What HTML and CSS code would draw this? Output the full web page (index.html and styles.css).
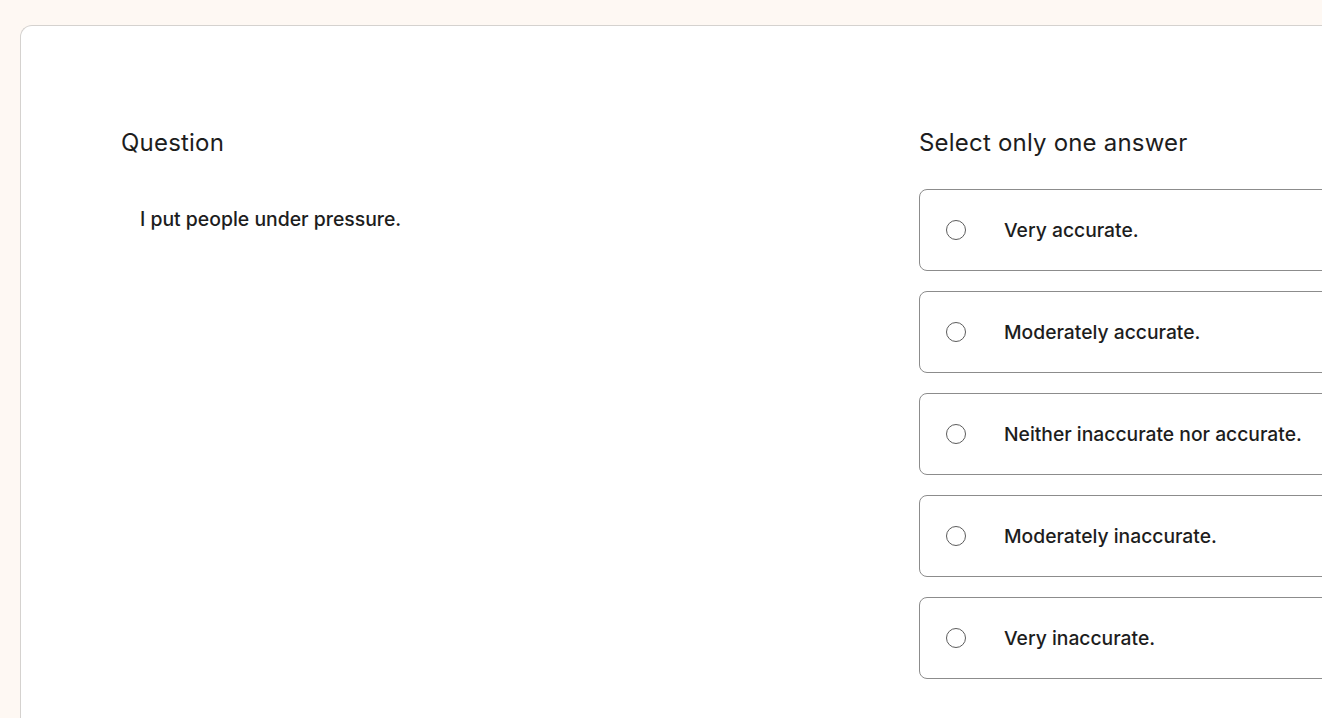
FILE: index.html
```html
<!DOCTYPE html>
<html lang="en">
<head>
<meta charset="utf-8">
<title>Question</title>
<link rel="stylesheet" href="styles.css">
</head>
<body>
<div class="page">
  <main class="card">
    <section class="question">
      <h2 class="heading">Question</h2>
      <p class="question-text">I put people under pressure.</p>
    </section>
    <section class="answers">
      <h2 class="heading">Select only one answer</h2>
      <div class="options">
        <label class="option"><span class="radio"></span><span class="label">Very accurate.</span></label>
        <label class="option"><span class="radio"></span><span class="label">Moderately accurate.</span></label>
        <label class="option"><span class="radio"></span><span class="label">Neither inaccurate nor accurate.</span></label>
        <label class="option"><span class="radio"></span><span class="label">Moderately inaccurate.</span></label>
        <label class="option"><span class="radio"></span><span class="label">Very inaccurate.</span></label>
      </div>
    </section>
  </main>
</div>
</body>
</html>
```
FILE: styles.css
```css
html, body {
  margin: 0;
  padding: 0;
}
body {
  background: #fef8f3;
  font-family: Inter, "Noto Sans", "Liberation Sans", sans-serif;
  color: #1d1d1d;
  overflow: hidden;
  height: 718px;
}
.page {
  padding: 25px 0 0 20px;
}
.card {
  background: #ffffff;
  border: 1px solid #d5d2cf;
  border-right: none;
  border-radius: 12px 0 0 0;
  padding: 102px 0 60px 100px;
  width: 1400px;
  min-height: 700px;
  display: grid;
  grid-template-columns: 798px 500px;
}
.heading {
  margin: 0;
  font-size: 24px;
  line-height: 30px;
  font-weight: 400;
  letter-spacing: 0.2px;
  color: #1d1d1d;
}
.question-text {
  margin: 49px 0 0 19px;
  font-size: 19.4px;
  line-height: 24px;
  font-weight: 500;
}
.options {
  margin-top: 31px;
  display: flex;
  flex-direction: column;
  gap: 20px;
}
.option {
  display: flex;
  align-items: center;
  height: 80px;
  border: 1px solid #8c8c8c;
  border-radius: 8px;
  padding-left: 26px;
  box-sizing: content-box;
}
.radio {
  width: 18px;
  height: 18px;
  border: 1.3px solid #5c5c5c;
  border-radius: 50%;
  flex: none;
}
.label {
  margin-left: 38px;
  font-size: 19.3px;
  line-height: 24px;
  font-weight: 500;
}
```
